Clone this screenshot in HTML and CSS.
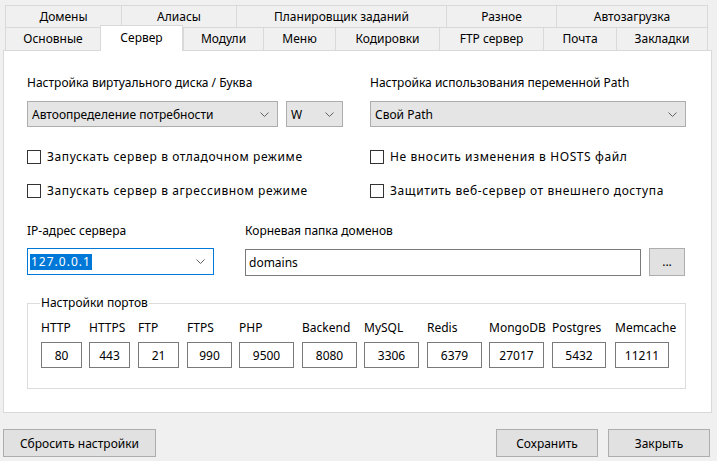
FILE: index.html
```html
<!DOCTYPE html>
<html lang="ru">
<head>
<meta charset="utf-8">
<link rel="stylesheet" href="styles.css">
</head>
<body>
<div class="window">
  <div class="tabs">
    <div class="tabrow row1">
      <div class="tab">Домены</div>
      <div class="tab">Алиасы</div>
      <div class="tab">Планировщик заданий</div>
      <div class="tab">Разное</div>
      <div class="tab last">Автозагрузка</div>
    </div>
    <div class="tabrow row2">
      <div class="tab">Основные</div>
      <div class="tab active">Сервер</div>
      <div class="tab">Модули</div>
      <div class="tab">Меню</div>
      <div class="tab">Кодировки</div>
      <div class="tab">FTP сервер</div>
      <div class="tab">Почта</div>
      <div class="tab last">Закладки</div>
    </div>
  </div>
  <div class="panel">
    <div class="grid-top">
      <div class="field">
        <div class="label">Настройка виртуального диска / Буква</div>
        <div class="combo-pair">
          <div class="combo combo-auto"><span>Автоопределение потребности</span><svg class="chev" width="9" height="5" viewBox="0 0 9 5"><path d="M0.5 0.5 L4.5 4.5 L8.5 0.5" fill="none" stroke="#606060" stroke-width="1"/></svg></div>
          <div class="combo combo-letter"><span>W</span><svg class="chev" width="9" height="5" viewBox="0 0 9 5"><path d="M0.5 0.5 L4.5 4.5 L8.5 0.5" fill="none" stroke="#606060" stroke-width="1"/></svg></div>
        </div>
      </div>
      <div class="field">
        <div class="label">Настройка использования переменной Path</div>
        <div class="combo combo-path"><span>Свой Path</span><svg class="chev" width="9" height="5" viewBox="0 0 9 5"><path d="M0.5 0.5 L4.5 4.5 L8.5 0.5" fill="none" stroke="#606060" stroke-width="1"/></svg></div>
      </div>
      <label class="check first"><span class="box"></span>Запускать сервер в отладочном режиме</label>
      <label class="check first"><span class="box"></span>Не вносить изменения в HOSTS файл</label>
      <label class="check"><span class="box"></span>Запускать сервер в агрессивном режиме</label>
      <label class="check"><span class="box"></span>Защитить веб-сервер от внешнего доступа</label>
    </div>
    <div class="grid-ip">
      <div class="field">
        <div class="label">IP-адрес сервера</div>
        <div class="combo combo-ip"><span class="sel">127.0.0.1</span><svg class="chev" width="9" height="5" viewBox="0 0 9 5"><path d="M0.5 0.5 L4.5 4.5 L8.5 0.5" fill="none" stroke="#606060" stroke-width="1"/></svg></div>
      </div>
      <div class="field">
        <div class="label">Корневая папка доменов</div>
        <div class="path-row">
          <div class="edit">domains</div>
          <div class="btn dots">...</div>
        </div>
      </div>
    </div>
    <fieldset class="ports">
      <legend>Настройки портов</legend>
      <div class="port-row">
        <div class="port"><div class="plabel">HTTP</div><div class="pinput w41">80</div></div>
        <div class="port"><div class="plabel">HTTPS</div><div class="pinput w41">443</div></div>
        <div class="port"><div class="plabel">FTP</div><div class="pinput w41">21</div></div>
        <div class="port"><div class="plabel">FTPS</div><div class="pinput w45">990</div></div>
        <div class="port"><div class="plabel">PHP</div><div class="pinput w55">9500</div></div>
        <div class="port"><div class="plabel">Backend</div><div class="pinput w55">8080</div></div>
        <div class="port"><div class="plabel">MySQL</div><div class="pinput w55">3306</div></div>
        <div class="port"><div class="plabel">Redis</div><div class="pinput w55">6379</div></div>
        <div class="port"><div class="plabel">MongoDB</div><div class="pinput w55">27017</div></div>
        <div class="port"><div class="plabel">Postgres</div><div class="pinput w54">5432</div></div>
        <div class="port"><div class="plabel">Memcache</div><div class="pinput w54">11211</div></div>
      </div>
    </fieldset>
  </div>
  <div class="footer">
    <div class="btn reset">Сбросить настройки</div>
    <div class="right-btns">
      <div class="btn action">Сохранить</div>
      <div class="btn action">Закрыть</div>
    </div>
  </div>
</div>
</body>
</html>
```
FILE: styles.css
```css
* { box-sizing: border-box; }
html, body {
  margin: 0;
  padding: 0;
  background: #f0f0f0;
}
body {
  font-family: "Noto Sans", "Open Sans", sans-serif;
  font-size: 12px;
  color: #000;
  width: 717px;
  height: 461px;
  overflow: hidden;
}
.window {
  padding-top: 5px;
}
.tabs {
  margin-left: 5px;
  width: 703px;
}
.tabrow {
  display: grid;
  height: 22px;
}
.row1 { grid-template-columns: 116px 115px 210px 110px 152px; }
.row2 {
  grid-template-columns: 95px 83px 80px 72px 104px 104px 73px 92px;
  height: 23px;
}
.tab {
  border-left: 1px solid #d9d9d9;
  border-top: 1px solid #d9d9d9;
  background: #f0f0f0;
  display: flex;
  align-items: center;
  justify-content: center;
  line-height: 16px;
  white-space: nowrap;
}
.tab.last { border-right: 1px solid #d9d9d9; }
.tab.active {
  position: relative;
  z-index: 1;
  background: #fff;
  margin-top: -2px;
  margin-bottom: -1px;
  border-right: 1px solid #d9d9d9;
  padding-bottom: 2px;
}
.panel {
  margin-left: 3px;
  width: 709px;
  height: 363px;
  background: #fff;
  border: 1px solid #d9d9d9;
  padding: 24px 0 0 23px;
}
.label {
  line-height: 16px;
  height: 16px;
  white-space: nowrap;
}
.grid-top {
  display: grid;
  grid-template-columns: 316px 316px;
  column-gap: 27px;
}
.field .label { margin-bottom: 10px; }
.combo {
  height: 26px;
  border: 1px solid #adadad;
  background: #e5e5e5;
  display: flex;
  align-items: center;
  justify-content: space-between;
  padding: 0 8px 0 4px;
  white-space: nowrap;
}
.chev { flex: none; }
.combo-pair {
  display: flex;
  gap: 8px;
}
.combo-auto { width: 251px; }
.combo-letter { width: 57px; }
.combo-path { width: 316px; }
.check {
  display: flex;
  align-items: center;
  height: 16px;
  line-height: 16px;
  margin-top: 18px;
  white-space: nowrap;
  letter-spacing: 0.6px;
}
.check.first { margin-top: 22px; }
.box {
  width: 14px;
  height: 14px;
  border: 1px solid #333;
  background: #fff;
  margin-right: 6px;
  flex: none;
}
.grid-ip {
  display: grid;
  grid-template-columns: 187px 440px;
  column-gap: 31px;
  margin-top: 24px;
}
.grid-ip .label { margin-bottom: 9px; }
.combo-ip {
  background: #fff;
  border-color: #0078d7;
  padding-left: 2px;
  height: 27px;
}
.sel {
  background: #0078d7;
  color: #fff;
  line-height: 16px;
  padding: 0 1px;
  letter-spacing: 1px;
}
.path-row {
  display: flex;
  gap: 8px;
  align-items: center;
}
.edit {
  width: 396px;
  height: 27px;
  border: 1px solid #7a7a7a;
  background: #fff;
  display: flex;
  align-items: center;
  padding-left: 3px;
}
.btn {
  border: 1px solid #adadad;
  background: #e1e1e1;
  display: flex;
  align-items: center;
  justify-content: center;
  white-space: nowrap;
}
.dots {
  width: 36px;
  height: 28px;
  padding-bottom: 2px;
}
.ports {
  width: 659px;
  margin: 19px 0 0 0;
  border: 1px solid #dcdcdc;
  padding: 9px 0 20px 13px;
  min-width: 0;
}
.ports legend {
  padding: 0 1px;
  margin-left: -1px;
  line-height: 16px;
}
.port-row {
  display: grid;
  grid-template-columns: 48px 49px 49px 52px 63px 62px 63px 62px 63px 63px 54px;
}
.port { display: flex; flex-direction: column; }
.w41 { width: 41px; }
.w45 { width: 45px; }
.w54 { width: 54px; }
.w55 { width: 55px; }
.plabel {
  line-height: 16px;
  height: 16px;
  margin-bottom: 6px;
  white-space: nowrap;
}
.pinput {
  height: 26px;
  border: 1px solid #7a7a7a;
  background: #fff;
  display: flex;
  align-items: center;
  justify-content: center;
}
.footer {
  display: flex;
  justify-content: space-between;
  margin-top: 16px;
  padding: 0 7px 0 3px;
}
.reset { width: 153px; height: 28px; }
.right-btns { display: flex; gap: 10px; }
.action { width: 102px; height: 28px; }
```
